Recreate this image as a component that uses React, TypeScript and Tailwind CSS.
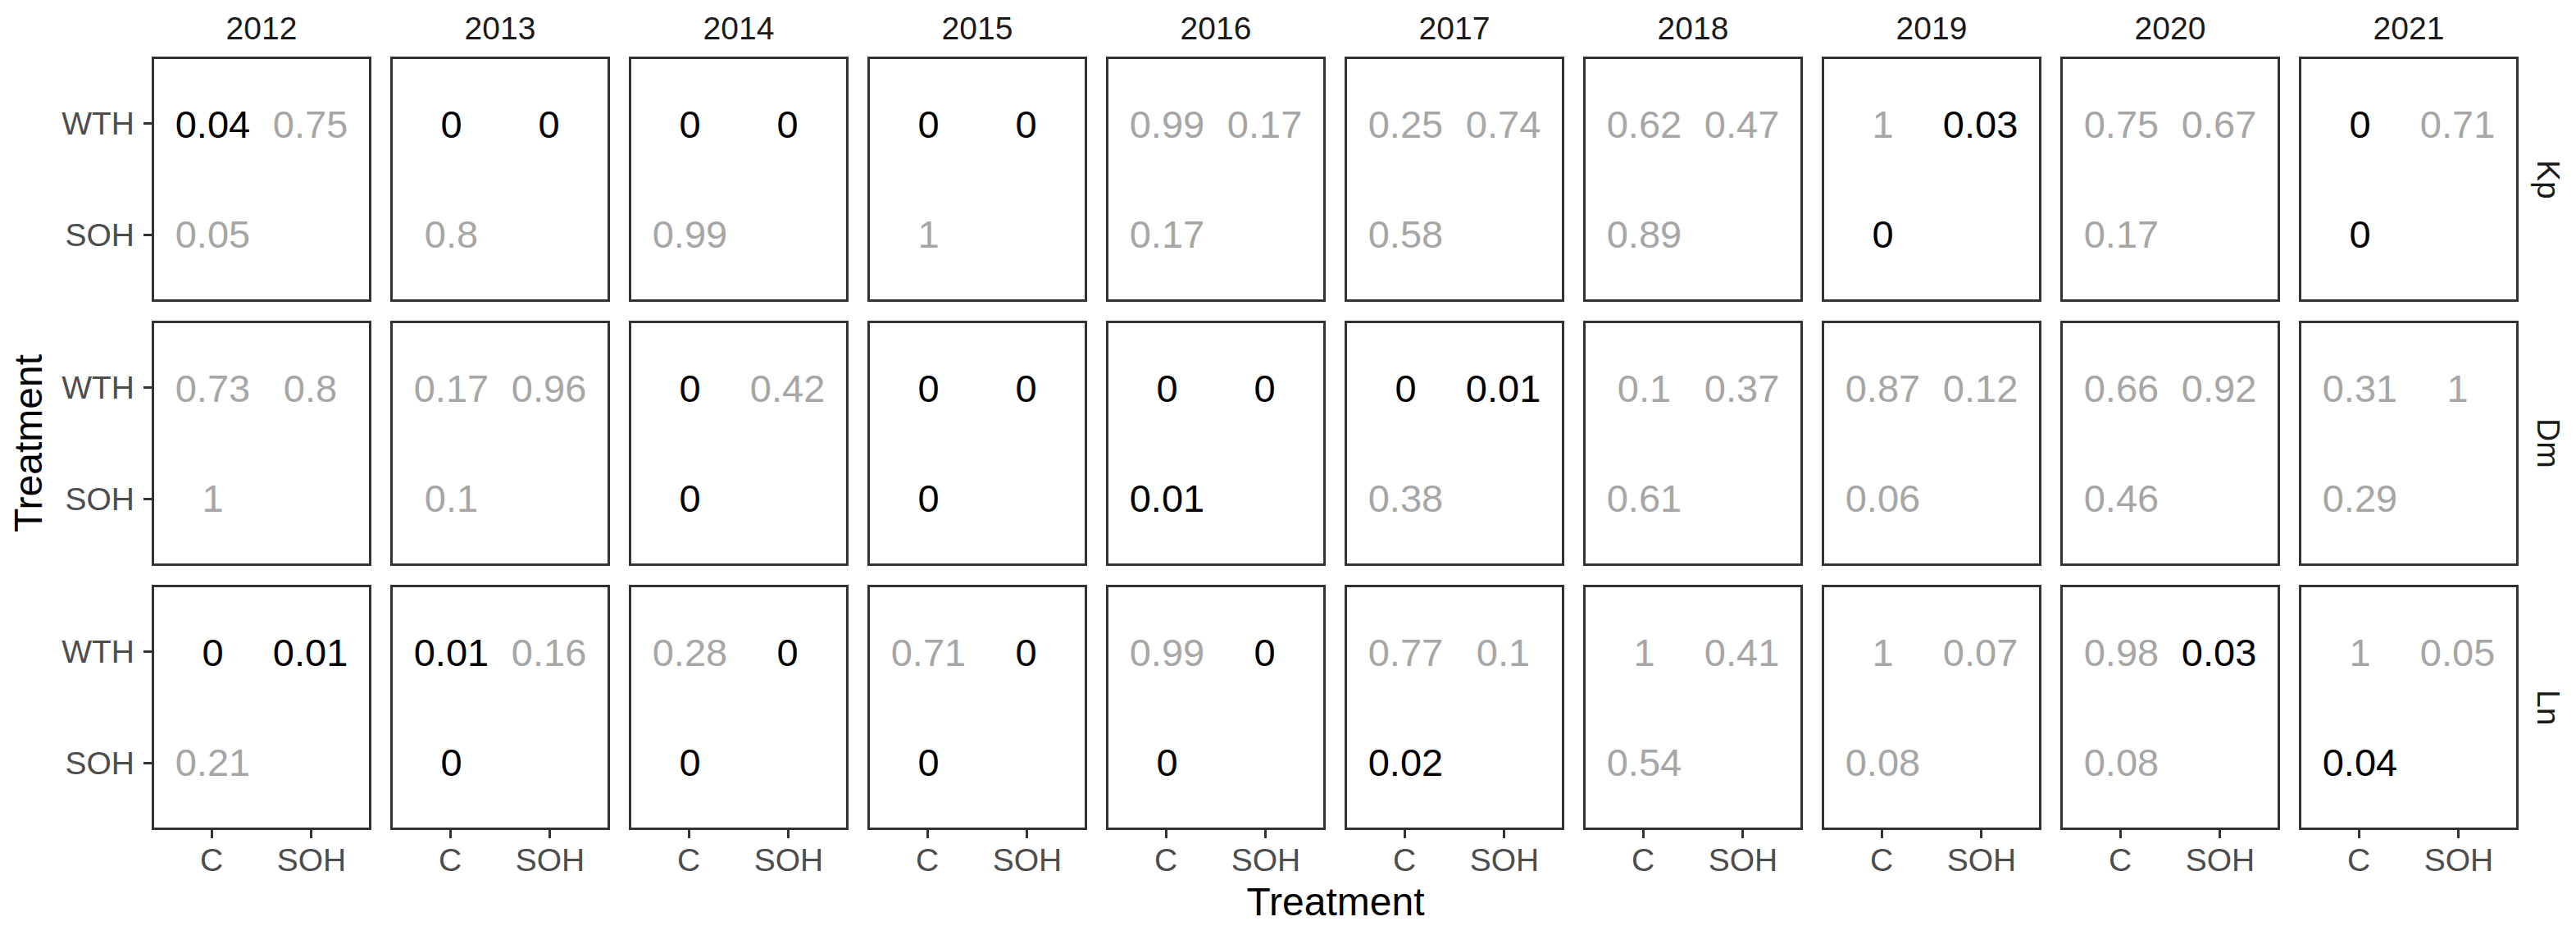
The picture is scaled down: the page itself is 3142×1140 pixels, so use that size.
import React from 'react';

const years = ['2012', '2013', '2014', '2015', '2016', '2017', '2018', '2019', '2020', '2021'];
const facets = ['Kp', 'Dm', 'Ln'];

// per year: [WTH vs C, WTH vs SOH, SOH vs C]
const data: Record<string, [string, string, string][]> = {
  Kp: [
    ['0.04', '0.75', '0.05'],
    ['0', '0', '0.8'],
    ['0', '0', '0.99'],
    ['0', '0', '1'],
    ['0.99', '0.17', '0.17'],
    ['0.25', '0.74', '0.58'],
    ['0.62', '0.47', '0.89'],
    ['1', '0.03', '0'],
    ['0.75', '0.67', '0.17'],
    ['0', '0.71', '0'],
  ],
  Dm: [
    ['0.73', '0.8', '1'],
    ['0.17', '0.96', '0.1'],
    ['0', '0.42', '0'],
    ['0', '0', '0'],
    ['0', '0', '0.01'],
    ['0', '0.01', '0.38'],
    ['0.1', '0.37', '0.61'],
    ['0.87', '0.12', '0.06'],
    ['0.66', '0.92', '0.46'],
    ['0.31', '1', '0.29'],
  ],
  Ln: [
    ['0', '0.01', '0.21'],
    ['0.01', '0.16', '0'],
    ['0.28', '0', '0'],
    ['0.71', '0', '0'],
    ['0.99', '0', '0'],
    ['0.77', '0.1', '0.02'],
    ['1', '0.41', '0.54'],
    ['1', '0.07', '0.08'],
    ['0.98', '0.03', '0.08'],
    ['1', '0.05', '0.04'],
  ],
};

function Val({ v }: { v: string }) {
  const sig = parseFloat(v) < 0.05;
  return <span className={sig ? 'text-black' : 'text-[#a6a6a6]'}>{v}</span>;
}

function Panel({ vals }: { vals: [string, string, string] }) {
  return (
    <div className="border-[3px] border-[#333333] grid grid-cols-[1fr_10fr_10fr_1fr] grid-rows-[1fr_10fr_10fr_1fr] text-[47px] leading-none">
      <div className="col-start-2 row-start-2 flex items-center justify-center">
        <Val v={vals[0]} />
      </div>
      <div className="col-start-3 row-start-2 flex items-center justify-center">
        <Val v={vals[1]} />
      </div>
      <div className="col-start-2 row-start-3 flex items-center justify-center">
        <Val v={vals[2]} />
      </div>
    </div>
  );
}

function YTick({ label, row }: { label: string; row: 'a' | 'b' }) {
  return (
    <div className={(row === 'a' ? 'row-start-2' : 'row-start-3') + ' flex items-center justify-end'}>
      <span className="text-[39px] leading-none text-[#4d4d4d] mr-[11px]">{label}</span>
      <div className="w-[10px] h-[3px] bg-[#333333]" />
    </div>
  );
}

function XTick({ label, col }: { label: string; col: 'a' | 'b' }) {
  return (
    <div className={(col === 'a' ? 'col-start-2' : 'col-start-3') + ' flex flex-col items-center'}>
      <div className="w-[3px] h-[10px] bg-[#333333]" />
      <span className="mt-[7px] text-[39px] leading-none text-[#4d4d4d]">{label}</span>
    </div>
  );
}

export default function App() {
  return (
    <div className="w-[3142px] h-[1140px] bg-white flex font-['Liberation_Sans',Arial,sans-serif] overflow-hidden">
      {/* left: y title + tick labels */}
      <div className="w-[185px] shrink-0 flex flex-col">
        <div className="h-[69px]" />
        <div className="h-[943px] flex">
          <div className="w-[70px] flex items-center pl-[11px]">
            <span className="[writing-mode:vertical-rl] rotate-180 text-[48px] leading-none text-black">
              Treatment
            </span>
          </div>
          <div className="flex-1 flex flex-col gap-[23px]">
            {facets.map((f) => (
              <div key={f} className="h-[299px] grid grid-rows-[1fr_10fr_10fr_1fr]">
                <YTick label="WTH" row="a" />
                <YTick label="SOH" row="b" />
              </div>
            ))}
          </div>
        </div>
      </div>

      {/* center: strips, panels, x axis */}
      <div className="w-[2888px] shrink-0 flex flex-col">
        <div className="h-[69px] grid grid-cols-[repeat(10,268px)] gap-x-[23px]">
          {years.map((y) => (
            <div key={y} className="flex items-center justify-center text-[39px] leading-none text-[#1a1a1a]">
              {y}
            </div>
          ))}
        </div>
        <div className="grid grid-cols-[repeat(10,268px)] grid-rows-[repeat(3,299px)] gap-[23px]">
          {facets.map((f) =>
            data[f].map((vals, i) => <Panel key={f + i} vals={vals} />)
          )}
        </div>
        <div className="grid grid-cols-[repeat(10,268px)] gap-x-[23px]">
          {years.map((y) => (
            <div key={y} className="grid grid-cols-[1fr_10fr_10fr_1fr]">
              <XTick label="C" col="a" />
              <XTick label="SOH" col="b" />
            </div>
          ))}
        </div>
        <div className="flex justify-center pt-[8px]">
          <span className="text-[48px] leading-none text-black">Treatment</span>
        </div>
      </div>

      {/* right: facet strips */}
      <div className="flex-1 flex flex-col">
        <div className="h-[69px]" />
        <div className="flex flex-col gap-[23px]">
          {facets.map((f) => (
            <div key={f} className="h-[299px] flex items-center pl-[16px]">
              <span className="[writing-mode:vertical-rl] text-[39px] leading-none text-[#1a1a1a]">{f}</span>
            </div>
          ))}
        </div>
      </div>
    </div>
  );
}
